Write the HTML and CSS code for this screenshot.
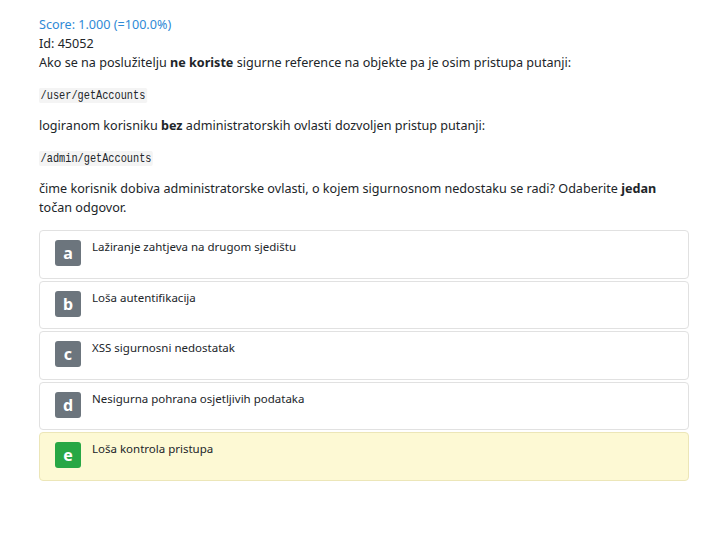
FILE: index.html
```html
<!DOCTYPE html>
<html>
<head>
<meta charset="utf-8">
<link rel="stylesheet" href="styles.css">
</head>
<body>
<div class="page">
  <div class="score">Score: 1.000 (=100.0%)</div>
  <div class="line">Id: 45052</div>
  <p class="line para">Ako se na poslužitelju <b>ne koriste</b> sigurne reference na objekte pa je osim pristupa putanji:</p>
  <p class="line para"><code>/user/getAccounts</code></p>
  <p class="line para">logiranom korisniku <b>bez</b> administratorskih ovlasti dozvoljen pristup putanji:</p>
  <p class="line para"><code>/admin/getAccounts</code></p>
  <p class="line para last">čime korisnik dobiva administratorske ovlasti, o kojem sigurnosnom nedostaku se radi? Odaberite <b>jedan</b> točan odgovor.</p>
  <div class="answers">
    <div class="answer"><span class="badge">a</span><span class="atext">Lažiranje zahtjeva na drugom sjedištu</span></div>
    <div class="answer"><span class="badge">b</span><span class="atext">Loša autentifikacija</span></div>
    <div class="answer"><span class="badge">c</span><span class="atext">XSS sigurnosni nedostatak</span></div>
    <div class="answer"><span class="badge">d</span><span class="atext">Nesigurna pohrana osjetljivih podataka</span></div>
    <div class="answer correct"><span class="badge green">e</span><span class="atext">Loša kontrola pristupa</span></div>
  </div>
</div>
</body>
</html>
```
FILE: styles.css
```css
html, body {
  margin: 0;
  padding: 0;
  background: #ffffff;
}
.page {
  padding: 15px 31px 0 39px;
  font-family: "Noto Sans", sans-serif;
  font-size: 12.6px;
  color: #212529;
}
.score {
  color: #2f8ad6;
  line-height: 19px;
}
.line {
  line-height: 19px;
  margin: 0;
}
.para {
  margin: 0 0 12.5px 0;
}
.para.last {
  margin-bottom: 13px;
}
b {
  font-weight: 700;
}
code {
  display: inline-block;
  font-family: "Liberation Mono", monospace;
  font-size: 13px;
  line-height: 15px;
  background: #f4f4f4;
  border-radius: 2px;
  padding: 0 2px;
  transform: scaleX(0.79);
  transform-origin: left center;
  vertical-align: middle;
  color: #212529;
}
.answers {
  display: flex;
  flex-direction: column;
  gap: 2px;
}
.answer {
  display: flex;
  align-items: flex-start;
  gap: 11px;
  height: 48.5px;
  box-sizing: border-box;
  border: 1px solid #e1e1e1;
  border-radius: 4px;
  padding: 8px 15px 0 15px;
  background: #ffffff;
}
.answer.correct {
  background: #fdf9d4;
  border-color: #ece6b8;
}
.badge {
  width: 26px;
  height: 26px;
  border-radius: 3px;
  background: #6c757d;
  color: #ffffff;
  font-weight: 700;
  font-size: 16px;
  display: flex;
  align-items: center;
  justify-content: center;
  flex: none;
  margin-top: 1px;
}
.badge.green {
  background: #28a745;
}
.atext {
  font-size: 11.5px;
  line-height: 16px;
}
```
